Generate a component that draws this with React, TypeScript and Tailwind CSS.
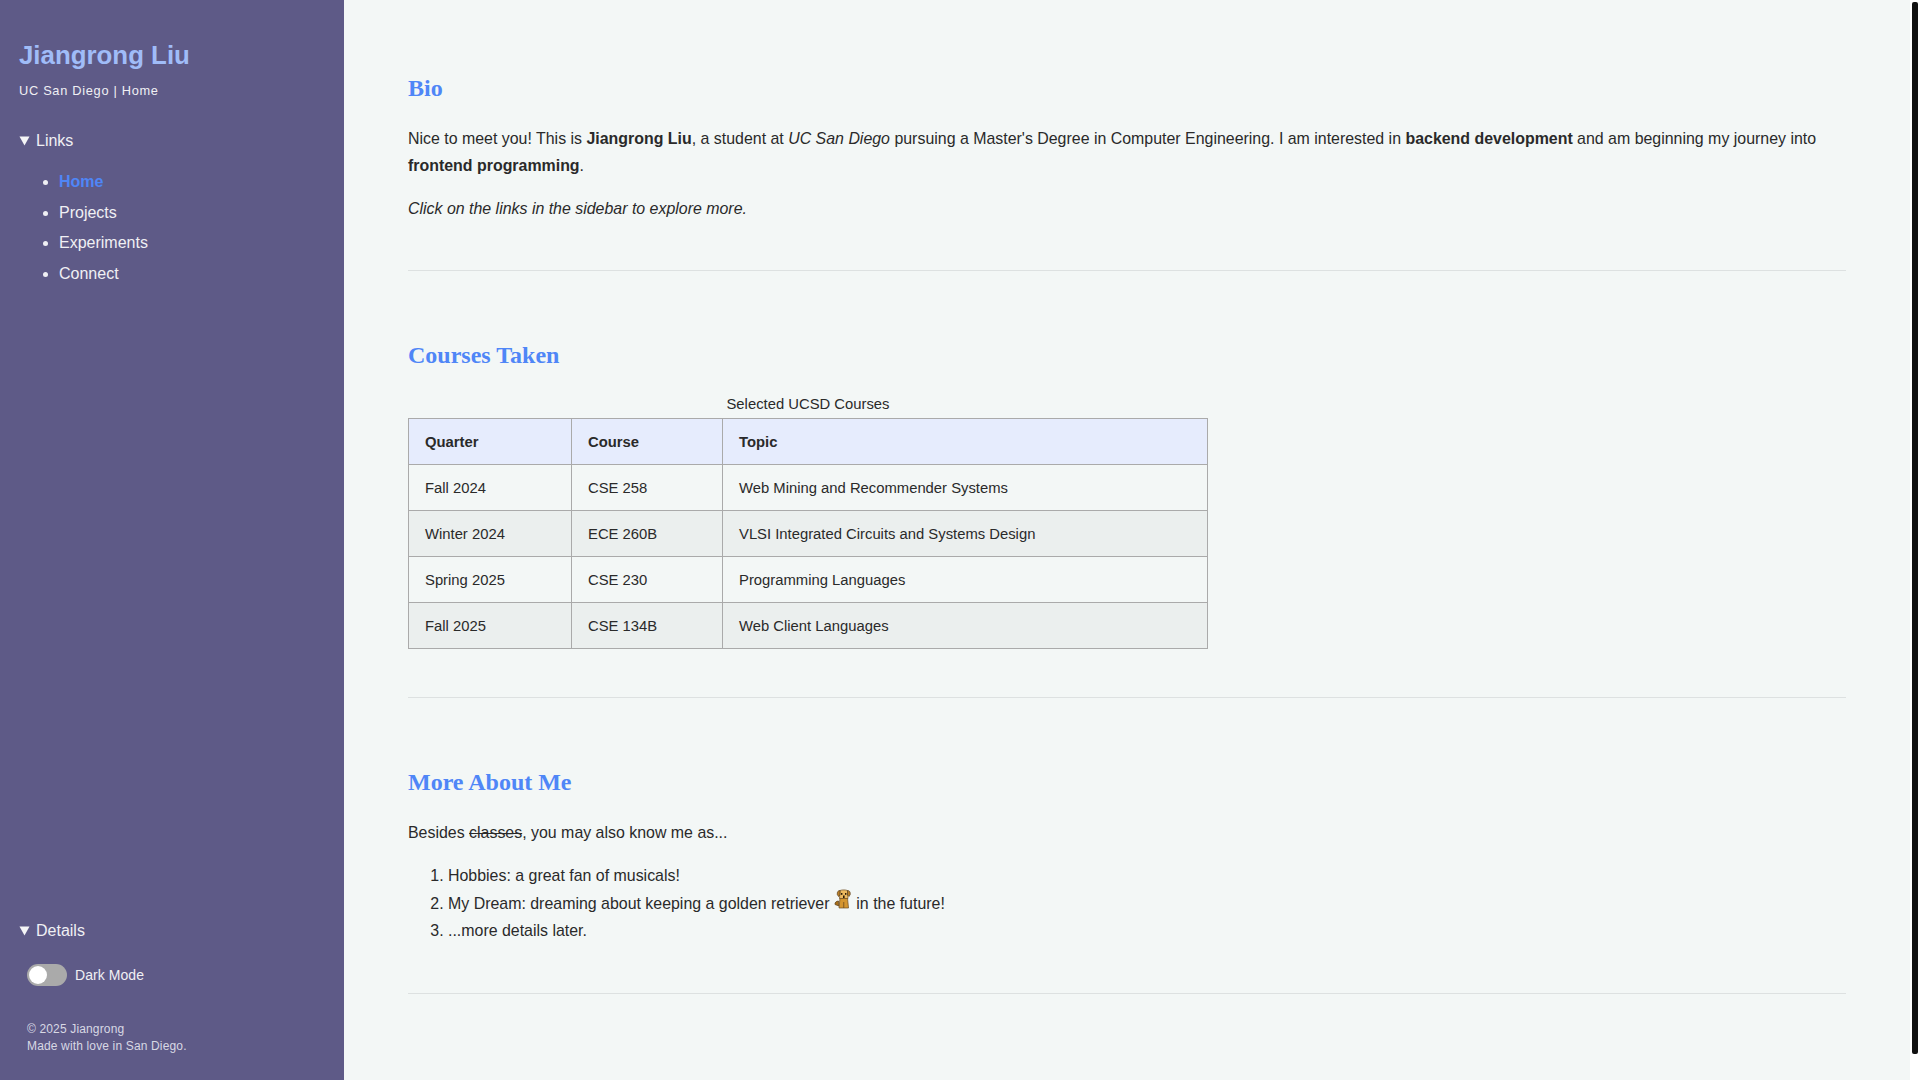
export default function App() {
  const rows = [
    ["Fall 2024", "CSE 258", "Web Mining and Recommender Systems"],
    ["Winter 2024", "ECE 260B", "VLSI Integrated Circuits and Systems Design"],
    ["Spring 2025", "CSE 230", "Programming Languages"],
    ["Fall 2025", "CSE 134B", "Web Client Languages"],
  ];
  const Tri = () => (
    <svg width="11" height="10" viewBox="0 0 11 10" className="mr-[6px] shrink-0">
      <path d="M0.5 0.5H10.5L5.5 9.5Z" fill="#f5f5f7" />
    </svg>
  );
  const h2 = "font-['Liberation_Serif',serif] text-[24px] font-bold leading-[28px] text-[#4f86f7]";
  return (
    <div className="flex h-screen w-full overflow-hidden bg-white font-['Liberation_Sans',Arial,sans-serif] text-[16px] text-[#2a2a2a] [text-rendering:optimizeLegibility]">
      <aside className="flex h-full w-[344px] shrink-0 flex-col justify-between bg-[#5e5a87] text-[#f0f0f4]">
        <div className="pl-[19px] pt-[38px]">
          <h1 className="text-[25.85px] font-bold leading-[34px] text-[#a0bcf8]">Jiangrong Liu</h1>
          <p className="mt-[10px] text-[12.8px] leading-[18px] tracking-[0.7px]">UC San Diego | Home</p>
          <div className="mt-[29px] flex h-[24px] items-center leading-[24px]"><Tri />Links</div>
          <ul className="mt-[17px] list-disc pl-[40px] leading-[24px]">
            <li className="mb-[7px] font-bold text-[#4f86f7] marker:text-[#f0f0f4]">Home</li>
            <li className="mb-[6px]">Projects</li>
            <li className="mb-[7px]">Experiments</li>
            <li>Connect</li>
          </ul>
        </div>
        <div className="pb-[25px] pl-[19px]">
          <div className="flex h-[24px] items-center leading-[24px]"><Tri />Details</div>
          <div className="ml-[8px] mt-[21px] flex items-center">
            <div className="flex h-[22px] w-[40px] items-center rounded-full bg-[#aaa] pl-[2px]">
              <div className="size-[18px] rounded-full bg-white" />
            </div>
            <span className="ml-[8px] text-[14px] tracking-[0.06px]">Dark Mode</span>
          </div>
          <div className="ml-[8px] mt-[35px] text-[12px] leading-[17px] tracking-[0.15px] text-[#d8d8e4]">
            <div>© 2025 Jiangrong</div>
            <div>Made with love in San Diego.</div>
          </div>
        </div>
      </aside>
      <main className="min-w-0 flex-1 overflow-hidden bg-[#f3f7f6] px-[64px] pt-[74px]">
        <h2 className={h2}>Bio</h2>
        <p className="mt-[23px] text-[15.93px] leading-[27px]">
          Nice to meet you! This is <b>Jiangrong Liu</b>, a student at <i>UC San Diego</i> pursuing a Master's Degree in Computer Engineering. I am interested in <b>backend development</b> and am beginning my journey into <b>frontend programming</b>.
        </p>
        <p className="mt-[16px] text-[15.93px] italic leading-[27px]">Click on the links in the sidebar to explore more.</p>
        <hr className="mt-[48px] border-0 border-t border-[#dde1e1]" />
        <h2 className={`${h2} mt-[70px]`}>Courses Taken</h2>
        <table className="mt-[22px] mb-[48px] border-collapse text-[14.82px] leading-[20px]">
          <caption className="h-[27px] pt-[1px] leading-[25px]">Selected UCSD Courses</caption>
          <thead>
            <tr className="bg-[#e6ecfd]">
              <th className="h-[46px] w-[163px] border border-[#aaa] px-[16px] text-left">Quarter</th>
              <th className="h-[46px] w-[151px] border border-[#aaa] px-[16px] text-left">Course</th>
              <th className="h-[46px] w-[485px] border border-[#aaa] px-[16px] text-left">Topic</th>
            </tr>
          </thead>
          <tbody>
            {rows.map((r, i) => (
              <tr key={r[0]} className={i % 2 ? "bg-[#ebefee]" : ""}>
                {r.map((c) => (
                  <td key={c} className="h-[46px] border border-[#aaa] px-[16px]">{c}</td>
                ))}
              </tr>
            ))}
          </tbody>
        </table>
        <hr className="border-0 border-t border-[#dde1e1]" />
        <h2 className={`${h2} mt-[70px]`}>More About Me</h2>
        <p className="mt-[23px] text-[15.93px] leading-[27px]">Besides <s>classes</s>, you may also know me as...</p>
        <ol className="mt-[16px] list-decimal pl-[40px] text-[15.93px] leading-[27px]">
          <li>Hobbies: a great fan of musicals!</li>
          <li className="pt-[1px]">
            My Dream: dreaming about keeping a golden retriever{" "}
            <svg width="18" height="20" viewBox="0 0 18 20" className="-my-[6px] inline-block align-[6px]">
              <path d="M1 15.5C0.5 13.5 2.5 12 4.5 12L5 17Z" fill="#a8701c" stroke="#5a4020" strokeWidth="0.7" />
              <path d="M6 9H13.5L14.5 19H5Z" fill="#d4952f" stroke="#6a4a20" strokeWidth="0.7" />
              <path d="M6 1.5C8 0.7 11.5 0.7 13.5 1.5L14 9.5H5.5Z" fill="#edb95e" stroke="#6a4a20" strokeWidth="0.7" />
              <path d="M6 1.5C4 1.5 3 3 3.3 5.5L4.5 7.5L6 6Z" fill="#b97f28" stroke="#5a4020" strokeWidth="0.7" />
              <path d="M13.5 1.5C15.5 1.5 16.5 3 16.2 5.5L15 7.5L13.5 6Z" fill="#b97f28" stroke="#5a4020" strokeWidth="0.7" />
              <rect x="7" y="4" width="1.4" height="1.8" fill="#2a1a08" />
              <rect x="11" y="4" width="1.4" height="1.8" fill="#2a1a08" />
              <rect x="9" y="6.5" width="1.6" height="2.5" fill="#2a1a08" />
              <rect x="9.4" y="13" width="0.8" height="6" fill="#6a4a20" />
            </svg>{" "}
            in the future!
          </li>
          <li>...more details later.</li>
        </ol>
        <hr className="mt-[49px] border-0 border-t border-[#dde1e1]" />
      </main>
      <div className="flex h-full w-[10px] shrink-0 bg-white pl-[2px] pr-[2px] pt-[2px] pb-[26px]">
        <div className="h-full w-full rounded-[2px] bg-[#111]" />
      </div>
    </div>
  );
}
